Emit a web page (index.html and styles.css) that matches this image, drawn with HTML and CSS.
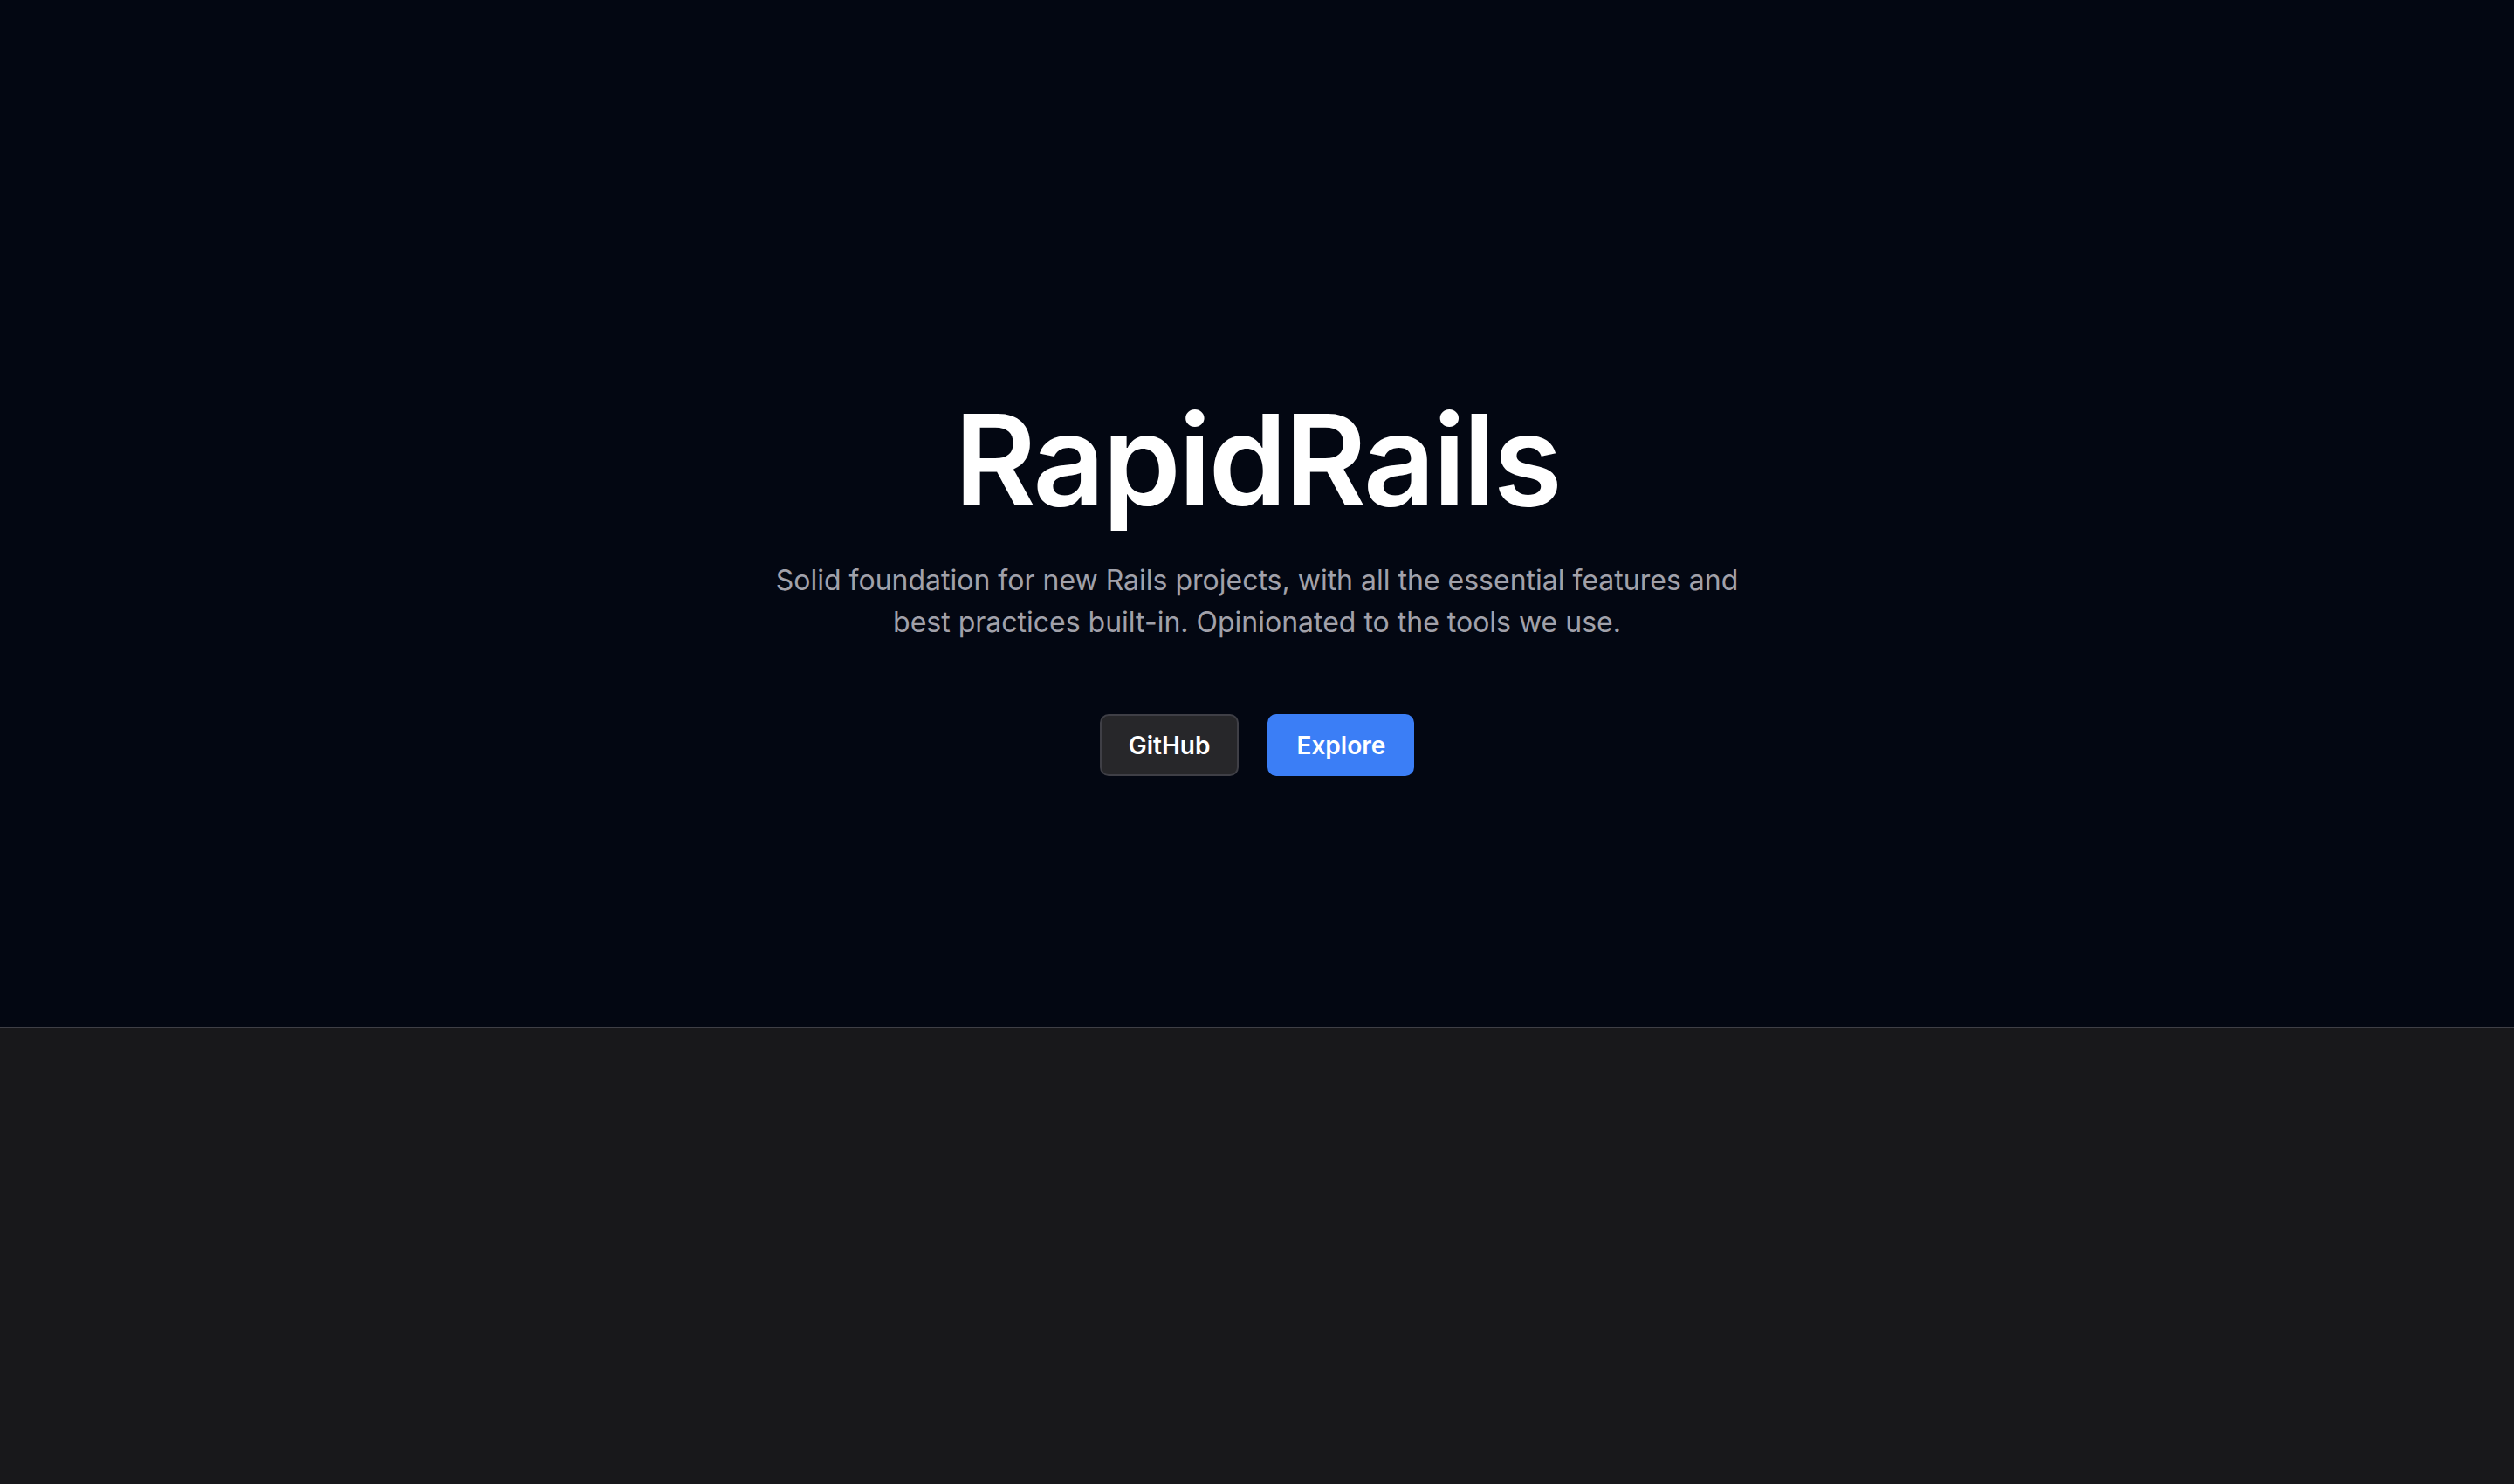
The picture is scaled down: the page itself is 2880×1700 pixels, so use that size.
FILE: index.html
```html
<!DOCTYPE html>
<html lang="en">
<head>
<meta charset="utf-8">
<title>RapidRails</title>
<link rel="stylesheet" href="styles.css">
</head>
<body>
<main class="page">
  <section class="hero">
    <h1 class="hero-title">RapidRails</h1>
    <p class="hero-lead">Solid foundation for new Rails projects, with all the essential features and best practices built-in. Opinionated to the tools we use.</p>
    <div class="hero-actions">
      <a class="btn btn-dark" href="#">GitHub</a>
      <a class="btn btn-primary" href="#">Explore</a>
    </div>
  </section>
  <section class="below"></section>
</main>
</body>
</html>
```

FILE: styles.css
```css
* { box-sizing: border-box; }
html, body { margin: 0; padding: 0; }
body {
  font-family: Inter, "Noto Sans", sans-serif;
  background: #18181b;
  color: #fff;
}
.page {
  display: flex;
  flex-direction: column;
  min-height: 100vh;
}
.hero {
  height: 1178px;
  background: #030712;
  border-bottom: 2px solid #3f3f46;
  display: flex;
  flex-direction: column;
  align-items: center;
  padding-top: 455px;
}
.hero-title {
  margin: 0;
  font-size: 144px;
  line-height: 144px;
  font-weight: 600;
  letter-spacing: -3px;
  color: #fff;
}
.hero-lead {
  margin: 42px 0 0;
  max-width: 1130px;
  text-align: center;
  font-size: 32px;
  line-height: 48px;
  color: #a1a1aa;
}
.hero-actions {
  margin-top: 81px;
  display: flex;
  gap: 33px;
}
.btn {
  display: flex;
  align-items: center;
  justify-content: center;
  height: 71px;
  padding: 0 31px;
  border-radius: 10px;
  font-size: 28px;
  font-weight: 600;
  color: #fff;
  text-decoration: none;
}
.btn-dark {
  background: #27272a;
  border: 2px solid #3f3f46;
}
.btn-primary {
  background: #3b7ef6;
  border: 2px solid #3b7ef6;
}
.below {
  flex: 1;
  background: #18181b;
}
```
